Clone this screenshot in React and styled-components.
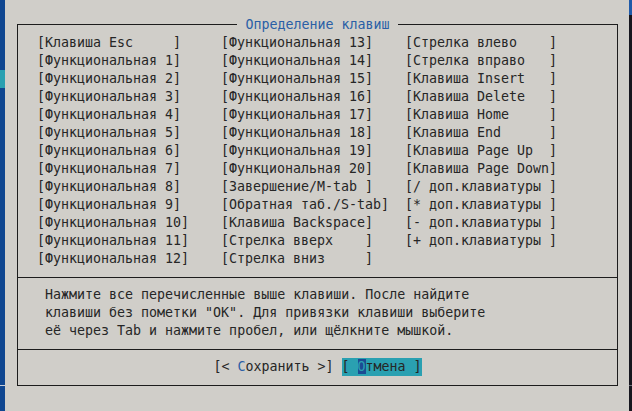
import styled, { createGlobalStyle } from 'styled-components';

const GlobalStyle = createGlobalStyle`
  html, body {
    margin: 0;
    padding: 0;
    background: #d0cec9;
  }
`;

const Screen = styled.div`
  display: flex;
  width: 632px;
  height: 411px;
  overflow: hidden;
  font-family: "DejaVu Sans Mono", "Liberation Mono", monospace;
  font-size: 13.3px;
  line-height: 18px;
  color: #262626;
`;

const Edge = styled.div`
  display: flex;
  flex-direction: column;
  width: ${(p) => p.$w}px;
  flex-shrink: 0;
`;

const EdgeSegment = styled.div`
  height: ${(p) => (p.$h ? `${p.$h}px` : 'auto')};
  flex: ${(p) => (p.$h ? '0 0 auto' : '1')};
  background: ${(p) => p.$color};
`;

const Dialog = styled.div`
  flex: 1;
  background: #d0cec9;
  padding: 16px 11px 0 12px;
`;

const Frame = styled.div`
  display: flex;
  flex-direction: column;
`;

const TitleRow = styled.div`
  display: flex;
  height: 18px;
`;

const TopLine = styled.div`
  flex: 1;
  align-self: flex-end;
  height: 9px;
  border-top: 1px solid #1c1c1c;
  border-left: ${(p) => (p.$side === 'left' ? '1px solid #1c1c1c' : 'none')};
  border-right: ${(p) => (p.$side === 'right' ? '1px solid #1c1c1c' : 'none')};
`;

const Title = styled.div`
  padding: 0 8px;
  color: #2a5fa6;
  white-space: pre;
`;

const FrameBody = styled.div`
  border: 1px solid #1c1c1c;
  border-top: none;
`;

const KeysSection = styled.div`
  display: grid;
  grid-template-columns: repeat(3, 184px);
  grid-template-rows: repeat(13, 18px);
  grid-auto-flow: column;
  padding: 0 0 9px 19px;
  border-bottom: 1px solid #1c1c1c;
`;

const KeyButton = styled.div`
  white-space: pre;
`;

const HelpSection = styled.div`
  padding: 8px 0 9px 27px;
  border-bottom: 1px solid #1c1c1c;
`;

const HelpLine = styled.div`
  white-space: pre;
`;

const ButtonRow = styled.div`
  display: flex;
  justify-content: center;
  gap: 8px;
  padding: 8px 0 9px;
  white-space: pre;
`;

const Button = styled.div`
  background: ${(p) => (p.$active ? '#2aa0b1' : 'transparent')};
`;

const Hotkey = styled.span`
  color: ${(p) => (p.$cursor ? '#2aa0b1' : '#2a5fa6')};
  background: ${(p) => (p.$cursor ? '#1b4b93' : 'transparent')};
`;

const columns = [
  [
    '[Клавиша Esc     ]',
    '[Функциональная 1]',
    '[Функциональная 2]',
    '[Функциональная 3]',
    '[Функциональная 4]',
    '[Функциональная 5]',
    '[Функциональная 6]',
    '[Функциональная 7]',
    '[Функциональная 8]',
    '[Функциональная 9]',
    '[Функциональная 10]',
    '[Функциональная 11]',
    '[Функциональная 12]',
  ],
  [
    '[Функциональная 13]',
    '[Функциональная 14]',
    '[Функциональная 15]',
    '[Функциональная 16]',
    '[Функциональная 17]',
    '[Функциональная 18]',
    '[Функциональная 19]',
    '[Функциональная 20]',
    '[Завершение/M-tab ]',
    '[Обратная таб./S-tab]',
    '[Клавиша Backspace]',
    '[Стрелка вверх    ]',
    '[Стрелка вниз     ]',
  ],
  [
    '[Стрелка влево    ]',
    '[Стрелка вправо   ]',
    '[Клавиша Insert   ]',
    '[Клавиша Delete   ]',
    '[Клавиша Home     ]',
    '[Клавиша End      ]',
    '[Клавиша Page Up  ]',
    '[Клавиша Page Down]',
    '[/ доп.клавиатуры ]',
    '[* доп.клавиатуры ]',
    '[- доп.клавиатуры ]',
    '[+ доп.клавиатуры ]',
  ],
];

const helpLines = [
  'Нажмите все перечисленные выше клавиши. После найдите',
  'клавиши без пометки "OK". Для привязки клавиши выберите',
  'её через Tab и нажмите пробел, или щёлкните мышкой.',
];

export default function App() {
  return (
    <>
      <GlobalStyle />
      <Screen>
        <Edge $w={5}>
          <EdgeSegment $h={70} $color="#0f4690" />
          <EdgeSegment $h={18} $color="#2aa0b1" />
          <EdgeSegment $h={297} $color="#0f4690" />
          <EdgeSegment $h={1} $color="#c9cdd6" />
          <EdgeSegment $color="#0f4690" />
        </Edge>

        <Dialog>
          <Frame>
            <TitleRow>
              <TopLine $side="left" />
              <Title>Определение клавиш</Title>
              <TopLine $side="right" />
            </TitleRow>
            <FrameBody>
              <KeysSection>
                {columns.map((col, ci) =>
                  col.map((label, ri) => (
                    <KeyButton
                      key={`${ci}-${ri}`}
                      style={{ gridColumn: ci + 1, gridRow: ri + 1 }}
                    >
                      {label}
                    </KeyButton>
                  ))
                )}
              </KeysSection>
              <HelpSection>
                {helpLines.map((line) => (
                  <HelpLine key={line}>{line}</HelpLine>
                ))}
              </HelpSection>
              <ButtonRow>
                <Button>
                  {'[< '}
                  <Hotkey>С</Hotkey>
                  {'охранить >]'}
                </Button>
                <Button $active>
                  {'[ '}
                  <Hotkey $cursor>О</Hotkey>
                  {'тмена ]'}
                </Button>
              </ButtonRow>
            </FrameBody>
          </Frame>
        </Dialog>

        <Edge $w={3}>
          <EdgeSegment $h={15} $color="#1f5aa8" />
          <EdgeSegment $h={370} $color="#16161e" />
          <EdgeSegment $h={1} $color="#6d6f78" />
          <EdgeSegment $color="#16161e" />
        </Edge>
      </Screen>
    </>
  );
}
